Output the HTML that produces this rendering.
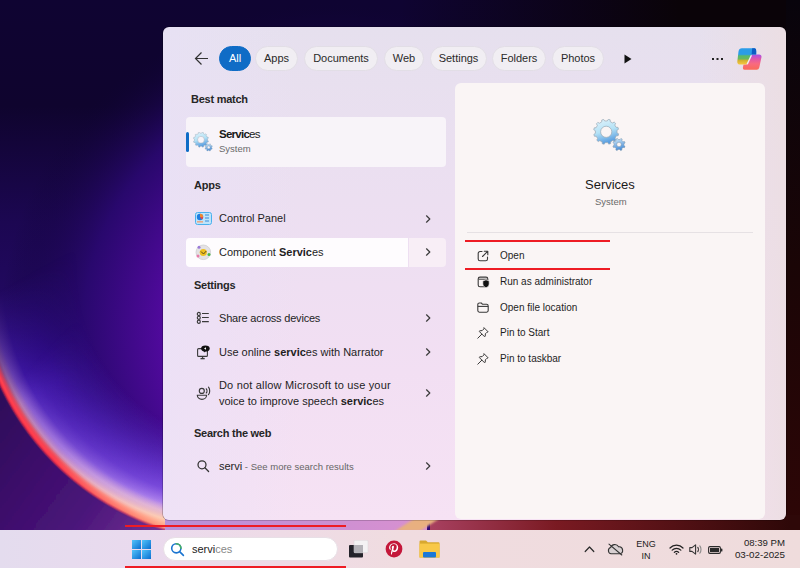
<!DOCTYPE html>
<html><head><meta charset="utf-8">
<style>
*{margin:0;padding:0;box-sizing:border-box}
html,body{width:800px;height:568px;overflow:hidden}
body{position:relative;font-family:"Liberation Sans",sans-serif;color:#1c1c1c;background:#0d0426}
.a{position:absolute;white-space:nowrap;line-height:1}
#wall{position:absolute;left:0;top:0;width:800px;height:531px}
#panel{position:absolute;left:163px;top:27px;width:623px;height:492.5px;border-radius:6px;
 background:linear-gradient(90deg,rgba(236,222,226,0) 86%,rgba(236,222,226,.9) 100%),linear-gradient(90deg,rgba(232,226,248,.55) 0%,rgba(232,226,248,0) 22%),linear-gradient(180deg,#e6e0ee 0%,#ecdff1 35%,#f2dff3 70%,#f6e2f4 100%);overflow:hidden;
 box-shadow:0 0 0 0.6px rgba(0,0,0,.35)}
#panelR{position:absolute;left:455px;top:83px;width:310px;height:436px;border-radius:6px;background:#faf5f5}
.pill{position:absolute;top:46px;height:25px;border-radius:13px;background:#f1eef3;border:1px solid #e2dee6;font-size:11px;color:#2a2a2a;text-align:center;line-height:23px}
.hdr{font-size:11px;font-weight:bold;letter-spacing:-0.25px;color:#262626}
.it{font-size:11px;color:#1e1e1e}
.chev{position:absolute;width:6px;height:6px;border-right:1.3px solid #333;border-top:1.3px solid #333;transform:rotate(45deg)}
.act{font-size:10px;color:#1e1e1e}
#taskbar{position:absolute;left:0;top:530px;width:800px;height:38px;background:linear-gradient(90deg,#e4dcee 0%,#eadaee 18%,#eedbe6 35%,#f0dce0 50%,#efdcdc 100%)}
.red{position:absolute;background:#ee1c24}
</style></head><body>
<svg id="wall" width="800" height="531" viewBox="0 0 800 531">
 <defs>
  <linearGradient id="base" x1="0" y1="0" x2="0" y2="531" gradientUnits="userSpaceOnUse">
   <stop offset="0" stop-color="#0f0432"/>
   <stop offset="0.2" stop-color="#0f042e"/>
   <stop offset="0.42" stop-color="#1c0752"/>
   <stop offset="0.7" stop-color="#260a6c"/>
   <stop offset="1" stop-color="#2a0c70"/>
  </linearGradient>
  <radialGradient id="vio" cx="330" cy="330" r="330" gradientUnits="userSpaceOnUse">
   <stop offset="0" stop-color="#7a10c0"/>
   <stop offset="0.45" stop-color="#5a0aa8"/>
   <stop offset="0.75" stop-color="#2a0870" stop-opacity="0.9"/>
   <stop offset="1" stop-color="#0e0330" stop-opacity="0"/>
  </radialGradient>
  <radialGradient id="glow" cx="245" cy="272" r="270" gradientUnits="userSpaceOnUse">
   <stop offset="0.62" stop-color="#3a10b0" stop-opacity="0"/>
   <stop offset="0.8" stop-color="#4212c0" stop-opacity="0.75"/>
   <stop offset="0.9" stop-color="#5020d0" stop-opacity="0.95"/>
   <stop offset="0.94" stop-color="#9a68e8" stop-opacity="1"/>
   <stop offset="0.962" stop-color="#e0a0d0" stop-opacity="1"/>
   <stop offset="0.978" stop-color="#ff7a78" stop-opacity="1"/>
   <stop offset="1" stop-color="#ff3848" stop-opacity="1"/>
  </radialGradient>
  <radialGradient id="ring" cx="245" cy="272" r="272" gradientUnits="userSpaceOnUse">
   <stop offset="0.962" stop-color="#ff3848" stop-opacity="0"/>
   <stop offset="0.98" stop-color="#ff4050" stop-opacity="1"/>
   <stop offset="0.994" stop-color="#ff3040" stop-opacity="1"/>
   <stop offset="1" stop-color="#ff3040" stop-opacity="0"/>
  </radialGradient>
  <linearGradient id="mfade" x1="0" y1="290" x2="120" y2="500" gradientUnits="userSpaceOnUse">
   <stop offset="0" stop-color="#fff" stop-opacity="0"/>
   <stop offset="0.45" stop-color="#fff" stop-opacity="0.75"/>
   <stop offset="1" stop-color="#fff" stop-opacity="1"/>
  </linearGradient>
  <linearGradient id="mfade2" x1="0" y1="300" x2="0" y2="375" gradientUnits="userSpaceOnUse">
   <stop offset="0" stop-color="#fff" stop-opacity="0"/>
   <stop offset="1" stop-color="#fff" stop-opacity="1"/>
  </linearGradient>
  <mask id="mk2" maskUnits="userSpaceOnUse" x="0" y="0" width="800" height="531"><rect width="800" height="531" fill="url(#mfade2)"/></mask>
  <radialGradient id="peach" cx="245" cy="272" r="272" gradientUnits="userSpaceOnUse">
   <stop offset="0.9" stop-color="#ffc8a8" stop-opacity="0"/>
   <stop offset="0.955" stop-color="#ffd0b0" stop-opacity="1"/>
   <stop offset="0.985" stop-color="#ffa080" stop-opacity="1"/>
   <stop offset="1" stop-color="#ff8070" stop-opacity="0"/>
  </radialGradient>
  <radialGradient id="lilg" cx="245" cy="272" r="272" gradientUnits="userSpaceOnUse">
   <stop offset="0.62" stop-color="#9060e8" stop-opacity="0"/>
   <stop offset="0.85" stop-color="#a070f0" stop-opacity="0.6"/>
   <stop offset="0.93" stop-color="#d0a8f0" stop-opacity="1"/>
   <stop offset="0.965" stop-color="#e8b8e8" stop-opacity="0"/>
  </radialGradient>
  <linearGradient id="mfade3" x1="60" y1="450" x2="165" y2="530" gradientUnits="userSpaceOnUse">
   <stop offset="0" stop-color="#fff" stop-opacity="0"/>
   <stop offset="1" stop-color="#fff" stop-opacity="1"/>
  </linearGradient>
  <mask id="mk3" maskUnits="userSpaceOnUse" x="0" y="0" width="800" height="531"><rect width="800" height="531" fill="url(#mfade3)"/></mask>
  <linearGradient id="mfade4" x1="0" y1="400" x2="140" y2="525" gradientUnits="userSpaceOnUse">
   <stop offset="0" stop-color="#fff" stop-opacity="0"/>
   <stop offset="1" stop-color="#fff" stop-opacity="1"/>
  </linearGradient>
  <mask id="mk4" maskUnits="userSpaceOnUse" x="0" y="0" width="800" height="531"><rect width="800" height="531" fill="url(#mfade4)"/></mask>
  <mask id="mk" maskUnits="userSpaceOnUse" x="0" y="0" width="800" height="531"><rect width="800" height="531" fill="url(#mfade)"/></mask>
  <linearGradient id="out" x1="0" y1="400" x2="180" y2="531" gradientUnits="userSpaceOnUse">
   <stop offset="0" stop-color="#2e0a5a"/>
   <stop offset="0.6" stop-color="#4a147a"/>
   <stop offset="1" stop-color="#7a3a98"/>
  </linearGradient>
  <linearGradient id="dark" x1="0" y1="0" x2="800" y2="0" gradientUnits="userSpaceOnUse">
   <stop offset="0" stop-color="#0a0308" stop-opacity="0"/>
   <stop offset="0.5" stop-color="#0a0308" stop-opacity="0"/>
   <stop offset="0.85" stop-color="#0a0308" stop-opacity="1"/>
  </linearGradient>
  <linearGradient id="rstrip" x1="0" y1="0" x2="0" y2="531" gradientUnits="userSpaceOnUse">
   <stop offset="0" stop-color="#08040c"/>
   <stop offset="0.5" stop-color="#1a0506"/>
   <stop offset="1" stop-color="#2e0606"/>
  </linearGradient>
  <linearGradient id="mar" x1="430" y1="0" x2="790" y2="0" gradientUnits="userSpaceOnUse">
   <stop offset="0" stop-color="#a84060"/><stop offset="0.35" stop-color="#7a1a22"/><stop offset="1" stop-color="#2e0808"/></linearGradient>
  <linearGradient id="lil" x1="165" y1="0" x2="420" y2="0" gradientUnits="userSpaceOnUse">
   <stop offset="0" stop-color="#b890d8"/><stop offset="1" stop-color="#d890d0"/></linearGradient>
  <filter id="b1" filterUnits="userSpaceOnUse" x="-100" y="-100" width="1000" height="800"><feGaussianBlur stdDeviation="1"/></filter>
 </defs>
 <rect width="800" height="531" fill="url(#base)"/>
 <rect width="800" height="531" fill="url(#vio)"/>
 <circle cx="245" cy="272" r="270" fill="url(#glow)" mask="url(#mk)"/>
 <circle cx="245" cy="272" r="272" fill="url(#ring)" mask="url(#mk2)"/>
 <circle cx="245" cy="272" r="272" fill="url(#lilg)" mask="url(#mk4)"/>
 <circle cx="245" cy="272" r="272" fill="url(#peach)" mask="url(#mk3)"/>
 <path d="M-25 272 A270 270 0 0 0 245 542 L245 600 L-40 600 L-40 272 Z" fill="url(#out)" filter="url(#b1)"/>
 <rect width="800" height="531" fill="url(#dark)"/>
 <rect x="786" y="0" width="14" height="531" fill="url(#rstrip)"/>
 <rect x="165" y="515" width="262" height="16" fill="url(#lil)"/>
 <rect x="430" y="515" width="370" height="16" fill="url(#mar)"/>
 <path d="M395 531L420 515H445L420 531Z" fill="#e8b080" filter="url(#b1)"/>
</svg>

<svg width="0" height="0" style="position:absolute">
<defs>
 <linearGradient id="gearG" x1="0" y1="0" x2="0.3" y2="1">
  <stop offset="0" stop-color="#e4f4fc"/>
  <stop offset="0.55" stop-color="#b4e2f6"/>
  <stop offset="1" stop-color="#5a9ee0"/>
 </linearGradient>
 <linearGradient id="gearG2" x1="0" y1="0" x2="0.3" y2="1">
  <stop offset="0" stop-color="#d8eefa"/>
  <stop offset="1" stop-color="#4a8ed8"/>
 </linearGradient>
 <symbol id="gears" viewBox="0 0 34 34">
  <path d="M24.05 13.89 L25.63 14.84 L25.16 16.76 L23.31 16.87 L22.05 19.17 L22.95 20.79 L21.58 22.21 L19.92 21.38 L17.68 22.74 L17.65 24.59 L15.75 25.14 L14.73 23.59 L12.11 23.65 L11.16 25.23 L9.24 24.76 L9.13 22.91 L6.83 21.65 L5.21 22.55 L3.79 21.18 L4.62 19.52 L3.26 17.28 L1.41 17.25 L0.86 15.35 L2.41 14.33 L2.35 11.71 L0.77 10.76 L1.24 8.84 L3.09 8.73 L4.35 6.43 L3.45 4.81 L4.82 3.39 L6.48 4.22 L8.72 2.86 L8.75 1.01 L10.65 0.46 L11.67 2.01 L14.29 1.95 L15.24 0.37 L17.16 0.84 L17.27 2.69 L19.57 3.95 L21.19 3.05 L22.61 4.42 L21.78 6.08 L23.14 8.32 L24.99 8.35 L25.54 10.25 L23.99 11.27Z M18.80 12.80 A5.6 5.6 0 1 0 7.60 12.80 A5.6 5.6 0 1 0 18.80 12.80Z" fill="url(#gearG)" fill-rule="evenodd" stroke="#98a8b4" stroke-width="0.7"/>
  <path d="M30.90 26.49 L32.03 27.33 L31.44 28.68 L30.06 28.42 L28.76 29.67 L28.97 31.06 L27.59 31.60 L26.80 30.44 L25.01 30.40 L24.17 31.53 L22.82 30.94 L23.08 29.56 L21.83 28.26 L20.44 28.47 L19.90 27.09 L21.06 26.30 L21.10 24.51 L19.97 23.67 L20.56 22.32 L21.94 22.58 L23.24 21.33 L23.03 19.94 L24.41 19.40 L25.20 20.56 L26.99 20.60 L27.83 19.47 L29.18 20.06 L28.92 21.44 L30.17 22.74 L31.56 22.53 L32.10 23.91 L30.94 24.70Z M28.30 25.50 A2.3 2.3 0 1 0 23.70 25.50 A2.3 2.3 0 1 0 28.30 25.50Z" fill="url(#gearG2)" fill-rule="evenodd" stroke="#7a94a8" stroke-width="0.5"/>
 </symbol>
 <symbol id="chev" viewBox="0 0 8 8"><path d="M2.5 0.8L5.8 4L2.5 7.2" stroke="#3a3a3a" stroke-width="1.2" fill="none" stroke-linecap="round" stroke-linejoin="round"/></symbol>
 <symbol id="pin" viewBox="0 0 12 12"><path d="M7.2 0.9L11.1 4.8L9.9 5.3L8.4 6.8L8.2 9.2L7.6 9.8L2.2 4.4L2.8 3.8L5.2 3.6L6.7 2.1Z M4.8 7.2L0.8 11.2" stroke="#3a3a3a" stroke-width="1" fill="none" stroke-linejoin="round" stroke-linecap="round"/></symbol>
</defs></svg>
<div id="panel">
</div>
<div id="panelR"></div>

<!-- top bar -->
<svg class="a" style="left:194px;top:51px" width="16" height="15" viewBox="0 0 16 15"><path d="M1.5 7.5H14M7.5 1.5L1.5 7.5L7.5 13.5" stroke="#333" stroke-width="1.2" fill="none"/></svg>
<div class="pill" style="left:219px;width:32px;background:#0f6cc6;border-color:#0f6cc6;color:#fff">All</div>
<div class="pill" style="left:255px;width:43px">Apps</div>
<div class="pill" style="left:304px;width:74px">Documents</div>
<div class="pill" style="left:384px;width:40px">Web</div>
<div class="pill" style="left:430px;width:57px">Settings</div>
<div class="pill" style="left:492px;width:54px">Folders</div>
<div class="pill" style="left:552px;width:52px">Photos</div>
<svg class="a" style="left:624px;top:54px" width="8" height="10" viewBox="0 0 8 10"><path d="M0.5 0.5L7.5 5L0.5 9.5Z" fill="#111"/></svg>
<div class="a" style="left:712px;top:58px;width:2px;height:2px;background:#222;box-shadow:4.5px 0 #222,9px 0 #222"></div>

<!-- left column -->
<div class="a hdr" style="left:191px;top:94px">Best match</div>
<div class="a" style="left:186px;top:117px;width:260px;height:50px;border-radius:4px;background:#f8f4f9"></div>
<div class="a" style="left:186px;top:132px;width:2.5px;height:20px;border-radius:1.5px;background:#0f6cc6"></div>
<div class="a" style="left:219px;top:128.5px;font-size:11.5px;letter-spacing:-0.75px;color:#1a1a1a"><b>Servic</b>es</div>
<div class="a" style="left:219px;top:144px;font-size:9.5px;color:#6a6a6a">System</div>

<div class="a hdr" style="left:194px;top:180px">Apps</div>
<div class="a it" style="left:219px;top:212.9px">Control Panel</div>
<div class="a" style="left:186px;top:237.5px;width:222px;height:29px;border-radius:4px 0 0 4px;background:#fefcfe"></div>
<div class="a" style="left:409px;top:237.5px;width:37px;height:29px;border-radius:0 4px 4px 0;background:#f8eef6"></div>
<div class="a it" style="left:219px;top:246.7px">Component <b>Servic</b>es</div>

<div class="a hdr" style="left:194px;top:280.3px">Settings</div>
<div class="a it" style="left:219px;top:312.9px;letter-spacing:-0.2px">Share across devices</div>
<div class="a it" style="left:219px;top:346.6px">Use online <b>servic</b>es with Narrator</div>
<div class="a it" style="left:219px;top:379.7px;letter-spacing:0.18px">Do not allow Microsoft to use your</div>
<div class="a it" style="left:219px;top:396.2px">voice to improve speech <b>servic</b>es</div>

<div class="a hdr" style="left:194px;top:428.3px">Search the web</div>
<div class="a it" style="left:219px;top:460.6px">servi<span style="font-size:9.5px;color:#666"> - See more search results</span></div>


<!-- icons -->
<svg class="a" style="left:193px;top:131.5px" width="20.5" height="20.5"><use href="#gears"/></svg>
<svg class="a" style="left:593px;top:118.5px" width="34" height="34"><use href="#gears"/></svg>
<svg class="a" style="left:195px;top:212px" width="17" height="13" viewBox="0 0 17 13">
 <rect x="0.5" y="0.5" width="16" height="12" rx="2" fill="#bfe4fa" stroke="#4ab0ee"/>
 <circle cx="5" cy="5" r="3.2" fill="#1e7ee0"/>
 <path d="M5 5L5 1.8A3.2 3.2 0 0 1 8.2 5Z" fill="#f08a30"/>
 <path d="M5 5L8.2 5A3.2 3.2 0 0 1 6.8 7.6Z" fill="#e84848"/>
 <rect x="2" y="9" width="6" height="1.6" fill="#e8a888"/>
 <path d="M10 3h4M10 6h4M10 9h4" stroke="#3a8ad8" stroke-width="1"/>
</svg>
<svg class="a" style="left:195px;top:244px" width="17" height="17" viewBox="0 0 17 17">
 <circle cx="8.3" cy="8.3" r="7.3" fill="#e4e2e4" stroke="#cfcfd2" stroke-width="0.8"/>
 <circle cx="8.3" cy="8.5" r="3.6" fill="#f0c020"/>
 <path d="M6 7.5l2.5 2.5l2.8-3" stroke="#5a4a20" stroke-width="1" fill="none"/>
 <circle cx="4" cy="3.2" r="1.5" fill="#9a7ad8"/>
 <circle cx="14" cy="10.5" r="1.5" fill="#48b848"/>
 <circle cx="3" cy="12" r="1.5" fill="#e87aa8"/>
</svg>
<svg class="a" style="left:196px;top:311px" width="14" height="14" viewBox="0 0 14 14" fill="none" stroke="#3a3a3a" stroke-width="1.15">
 <ellipse cx="2.8" cy="2.9" rx="1.5" ry="1.6"/><ellipse cx="2.8" cy="6.8" rx="1.5" ry="1.6"/><ellipse cx="2.8" cy="10.7" rx="1.5" ry="1.6"/>
 <path d="M6 2.5h6.8M6 6.5h6.8M6 10.6h6.8"/>
</svg>
<svg class="a" style="left:196px;top:344px" width="15" height="16" viewBox="0 0 15 16">
 <rect x="1.6" y="4.6" width="9.8" height="7.8" rx="1" fill="none" stroke="#3a3a3a" stroke-width="1.1"/>
 <path d="M4.5 14.6h4.2" stroke="#3a3a3a" stroke-width="1.4"/><path d="M6.6 12.4v2" stroke="#3a3a3a" stroke-width="1.1"/>
 <ellipse cx="9.4" cy="4.5" rx="4.3" ry="3.1" fill="#111"/>
 <path d="M7.8 6.8L8.5 8.4L9.8 7Z" fill="#111"/>
 <path d="M8 4.5L10 3.2V5.8Z" fill="#fff"/>
</svg>
<svg class="a" style="left:196px;top:385px" width="15" height="16" viewBox="0 0 15 16" fill="none" stroke="#3a3a3a" stroke-width="1.15">
 <circle cx="5.8" cy="5.9" r="2.5"/>
 <path d="M1.3 10.2h9.3c0 2.4-2.1 4.1-4.65 4.1S1.3 12.6 1.3 10.2Z"/>
 <path d="M10.3 3.8c.9 1 .9 3.2 0 4.2M12.5 2.2c1.6 1.8 1.6 5.6 0 7.4" stroke-linecap="round"/>
</svg>
<svg class="a" style="left:196px;top:459px" width="15" height="15" viewBox="0 0 15 15" fill="none" stroke="#333" stroke-width="1.25">
 <circle cx="6" cy="5.8" r="4"/><path d="M8.9 8.8L12.6 12.5" stroke-linecap="round"/>
</svg>
<svg class="a" style="left:423.5px;top:214.5px" width="8" height="8"><use href="#chev"/></svg>
<svg class="a" style="left:423.5px;top:248px" width="8" height="8"><use href="#chev"/></svg>
<svg class="a" style="left:423.5px;top:314px" width="8" height="8"><use href="#chev"/></svg>
<svg class="a" style="left:423.5px;top:348px" width="8" height="8"><use href="#chev"/></svg>
<svg class="a" style="left:423.5px;top:389px" width="8" height="8"><use href="#chev"/></svg>
<svg class="a" style="left:423.5px;top:462px" width="8" height="8"><use href="#chev"/></svg>
<!-- action icons -->
<svg class="a" style="left:477px;top:250px" width="12" height="12" viewBox="0 0 12 12" fill="none" stroke="#3a3a3a" stroke-width="1.1" stroke-linecap="round" stroke-linejoin="round">
 <path d="M5 1.5H3A1.8 1.8 0 0 0 1.2 3.3V9A1.8 1.8 0 0 0 3 10.8H8.7A1.8 1.8 0 0 0 10.5 9V7"/>
 <path d="M5.5 6.5L10.6 1.4M7.3 1.2H10.8V4.7"/>
</svg>
<svg class="a" style="left:477px;top:275.5px" width="13" height="12" viewBox="0 0 13 12">
 <rect x="1.2" y="1.1" width="9.6" height="9.6" rx="1.8" fill="none" stroke="#3a3a3a" stroke-width="1.1"/>
 <path d="M1.6 3.2h8.8" stroke="#3a3a3a" stroke-width="1"/>
 <path d="M5.8 4.9L9 3.8L12.2 4.9V7.9C12.2 9.9 10.6 11.1 9 11.7C7.4 11.1 5.8 9.9 5.8 7.9Z" fill="#111" stroke="#faf5f5" stroke-width="0.7"/>
</svg>
<svg class="a" style="left:477px;top:301.5px" width="12" height="11" viewBox="0 0 12 11" fill="none" stroke="#3a3a3a" stroke-width="1.1" stroke-linejoin="round">
 <path d="M0.8 2.6A1.6 1.6 0 0 1 2.4 1H4.3L5.6 2.3H9.6A1.6 1.6 0 0 1 11.2 3.9V8.6A1.6 1.6 0 0 1 9.6 10.2H2.4A1.6 1.6 0 0 1 0.8 8.6Z"/>
 <path d="M0.8 4.4H11.2"/>
</svg>
<svg class="a" style="left:477px;top:327px" width="12" height="12"><use href="#pin"/></svg>
<svg class="a" style="left:477px;top:352.6px" width="12" height="12"><use href="#pin"/></svg>
<!-- right panel -->
<div class="a" style="left:585px;top:177.8px;font-size:13px;color:#1a1a1a">Services</div>
<div class="a" style="left:595px;top:197px;font-size:9.5px;color:#6a6a6a">System</div>
<div class="a" style="left:467px;top:232px;width:286px;height:1px;background:#e6e1e4"></div>
<div class="a act" style="left:500px;top:251px">Open</div>
<div class="a act" style="left:500px;top:276.5px">Run as administrator</div>
<div class="a act" style="left:500px;top:302.5px">Open file location</div>
<div class="a act" style="left:500px;top:328px">Pin to Start</div>
<div class="a act" style="left:500px;top:353.5px">Pin to taskbar</div>

<div class="red" style="left:465px;top:240px;width:145px;height:2px"></div>
<div class="red" style="left:465px;top:268px;width:145px;height:2px"></div>

<!-- taskbar -->
<div id="taskbar"></div>
<div class="red" style="left:125px;top:524.5px;width:221px;height:2px"></div>
<div class="red" style="left:125px;top:566px;width:221px;height:2px"></div>
<div class="a" style="left:163px;top:537px;width:175px;height:24px;border-radius:12px;background:#fff;border:1px solid #e8dfe6"></div>
<div class="a" style="left:192px;top:544px;font-size:11px;color:#222">servi<span style="color:#888">ces</span></div>
<div class="a" style="left:725px;top:537.5px;width:60px;text-align:right;font-size:9.6px;color:#222">08:39 PM</div>
<div class="a" style="left:725px;top:550px;width:60px;text-align:right;font-size:9.8px;color:#222">03-02-2025</div>
<div class="a" style="left:636px;top:539.5px;width:20px;text-align:center;font-size:9px;color:#222">ENG</div>
<div class="a" style="left:636px;top:551.5px;width:20px;text-align:center;font-size:9px;color:#222">IN</div>

<!-- taskbar icons -->
<svg class="a" style="left:132px;top:540px" width="19" height="19" viewBox="0 0 19 19">
 <defs><linearGradient id="wl" x1="0" y1="0" x2="1" y2="1"><stop offset="0" stop-color="#52c4fa"/><stop offset="1" stop-color="#0a6ed0"/></linearGradient></defs>
 <rect x="0" y="0" width="9" height="9" fill="url(#wl)"/><rect x="10" y="0" width="9" height="9" fill="url(#wl)"/>
 <rect x="0" y="10" width="9" height="9" fill="url(#wl)"/><rect x="10" y="10" width="9" height="9" fill="url(#wl)"/>
</svg>
<svg class="a" style="left:170px;top:542px" width="15" height="15" viewBox="0 0 15 15" fill="none" stroke-width="1.6" stroke-linecap="round">
 <circle cx="6.3" cy="6.3" r="4.6" stroke="#1a74d0"/>
 <path d="M6.3 1.7A4.6 4.6 0 0 1 10.9 6.3" stroke="#48b060"/>
 <path d="M9.6 9.6L13.4 13.4" stroke="#1a74d0"/>
</svg>
<svg class="a" style="left:348px;top:540px" width="21" height="19" viewBox="0 0 21 19">
 <rect x="1" y="5" width="14" height="12.5" rx="1" fill="#23222a"/>
 <rect x="6" y="0.3" width="14" height="12.5" rx="1" fill="#f4f2f4" stroke="#d8d4d8" stroke-width="0.5"/>
 <rect x="6" y="5" width="9" height="7.8" fill="#b4b2b8"/>
</svg>
<svg class="a" style="left:385px;top:540px" width="18" height="18" viewBox="0 0 18 18">
 <circle cx="9" cy="9" r="8.4" fill="#c4173a"/>
 <path d="M8.6 3.6c-3 0-4.5 2-4.5 3.8c0 1.1.4 2 1.3 2.4c.1.1.3 0 .3-.1l.1-.5c0-.2 0-.2-.1-.4c-.3-.3-.4-.8-.4-1.4c0-1.8 1.3-3.3 3.5-3.3c1.9 0 2.9 1.1 2.9 2.7c0 2-.9 3.7-2.2 3.7c-.7 0-1.3-.6-1.1-1.3c.2-.9.6-1.8.6-2.4c0-.6-.3-1-.9-1c-.7 0-1.3.7-1.3 1.7c0 .6.2 1 .2 1l-.9 3.7c-.2.8-.1 2.2.1 2.9c.4-.6.9-1.6 1.1-2.3l.4-1.6c.3.5 1 .9 1.7.9c2.2 0 3.8-2 3.8-4.6c0-2.4-2-4.3-4.6-4.3Z" fill="#fff"/>
</svg>
<svg class="a" style="left:419px;top:540px" width="21" height="18" viewBox="0 0 21 18">
 <path d="M0.5 1.5A1 1 0 0 1 1.5 0.5H7L8.8 2.3H19.5A1 1 0 0 1 20.5 3.3V17.5H0.5Z" fill="#d8a830"/>
 <rect x="0.5" y="3.6" width="20" height="13.9" fill="#f8c848"/>
 <rect x="4" y="12" width="13" height="5.5" rx="1" fill="#1a78d8"/>
</svg>
<!-- tray -->
<svg class="a" style="left:584px;top:545px" width="11" height="8" viewBox="0 0 11 8" fill="none" stroke="#2a2a2a" stroke-width="1.2" stroke-linecap="round" stroke-linejoin="round"><path d="M1.2 6.5L5.5 2L9.8 6.5"/></svg>
<svg class="a" style="left:607px;top:543px" width="17" height="13" viewBox="0 0 17 13" fill="none" stroke="#333" stroke-width="1.1" stroke-linecap="round">
 <path d="M4.2 10.8A3.2 3.2 0 0 1 3.6 4.6A4.4 4.4 0 0 1 11.6 3.8A3.4 3.4 0 0 1 12.6 10.8Z" fill="#d8d0d2"/>
 <path d="M2 1.2L14.8 12"/>
</svg>
<svg class="a" style="left:669px;top:543.5px" width="15" height="11" viewBox="0 0 15 11" fill="none" stroke="#222" stroke-width="1.2" stroke-linecap="round">
 <path d="M1 4A9 9 0 0 1 14 4"/><path d="M3.2 6.2A6 6 0 0 1 11.8 6.2"/><path d="M5.3 8.3A3 3 0 0 1 9.7 8.3"/><circle cx="7.5" cy="9.8" r="0.9" fill="#222" stroke="none"/>
</svg>
<svg class="a" style="left:689px;top:544px" width="14" height="11" viewBox="0 0 14 11" fill="none" stroke="#333" stroke-width="1.1" stroke-linejoin="round" stroke-linecap="round">
 <path d="M0.8 3.6H3L6.6 0.9V10.1L3 7.4H0.8Z"/><path d="M8.8 3.4C9.6 4.4 9.6 6.6 8.8 7.6"/><path d="M10.8 1.8C12.4 3.6 12.4 7.4 10.8 9.2" stroke="#888"/>
</svg>
<svg class="a" style="left:708px;top:545.5px" width="15" height="8" viewBox="0 0 15 8">
 <rect x="0.6" y="0.6" width="11.8" height="6.8" rx="1.3" fill="none" stroke="#2a2a2a" stroke-width="1.1"/>
 <rect x="2" y="2" width="9" height="4" fill="#2a2a2a"/>
 <rect x="13" y="2.5" width="1.4" height="3" rx="0.5" fill="#2a2a2a"/>
</svg>
<!-- copilot -->
<svg class="a" style="left:737px;top:47.5px" width="25" height="23" viewBox="0 0 25 23">
 <defs>
  <linearGradient id="cpL" x1="0" y1="0" x2="0" y2="16.5" gradientUnits="userSpaceOnUse"><stop offset="0" stop-color="#2a9ce8"/><stop offset="0.38" stop-color="#2a9ce8"/><stop offset="0.48" stop-color="#5ab86a"/><stop offset="0.66" stop-color="#68b860"/><stop offset="0.75" stop-color="#d0b030"/><stop offset="1" stop-color="#f8c840"/></linearGradient>
  <linearGradient id="cpR" x1="0" y1="6.5" x2="0" y2="21.8" gradientUnits="userSpaceOnUse"><stop offset="0" stop-color="#a850e8"/><stop offset="0.3" stop-color="#e058a8"/><stop offset="0.6" stop-color="#f86a80"/><stop offset="1" stop-color="#fa6a58"/></linearGradient>
 </defs>
 <path d="M15 6.5H22Q24.7 6.5 24.5 9L22.3 19.5Q21.7 21.8 19.7 21.8H7.6Q5.5 21.8 5.9 19.5L6.5 16.5H9.6L13.8 7.6Q14.2 6.5 15 6.5Z" fill="url(#cpR)"/>
 <path d="M4.9 0.2H17.6Q19.5 0.5 19.2 3L19.2 6.5H14.6L10.4 15.5Q9.9 16.5 8.5 16.5H3.3Q0 16.5 0.3 13.4L1.5 3.5Q2.1 0.2 4.9 0.2Z" fill="url(#cpL)"/>
 <path d="M15.2 0.2H17.6Q19.5 0.5 19.2 3L19.2 6.5H14.6Z" fill="#0e5cc4"/>
 <path d="M14.4 7.2L10.2 16.2" stroke="#f4eef4" stroke-width="1.4"/>
</svg>
</body></html>
